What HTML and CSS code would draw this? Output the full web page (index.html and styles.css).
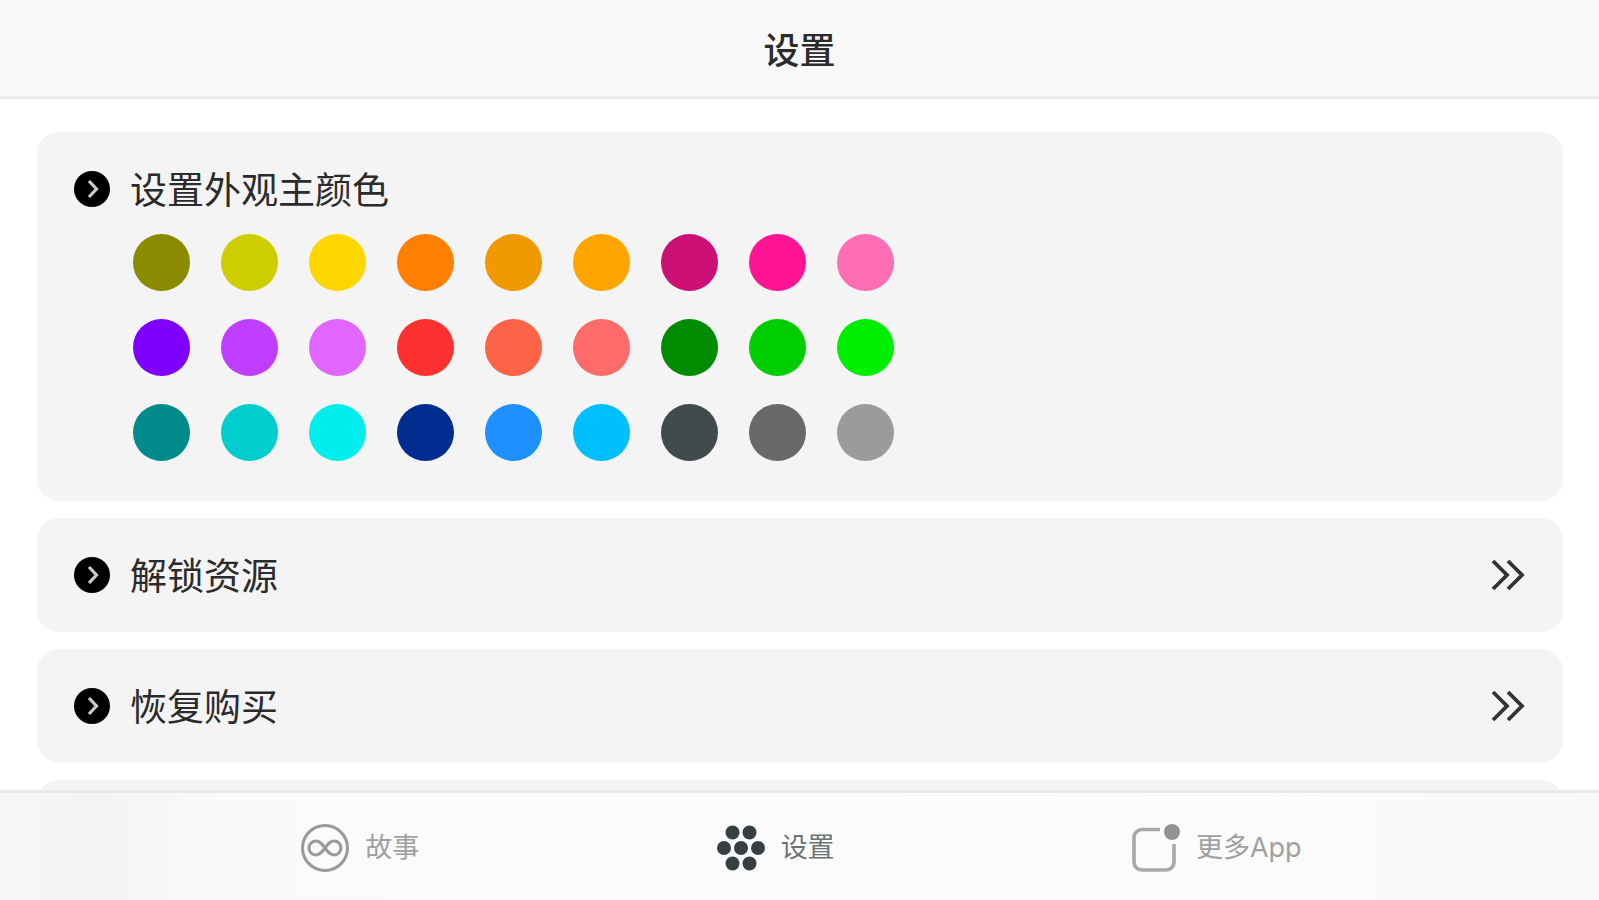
FILE: index.html
```html
<!DOCTYPE html>
<html lang="zh-CN">
<head>
	<meta charset="utf-8">
	<meta name="viewport" content="width=device-width, initial-scale=1">
	<title>设置</title>
	<link rel="stylesheet" href="styles.css">
</head>
<body>
	<!-- 公用图标 -->
	<svg class="defs" aria-hidden="true">
		<symbol id="dot" viewBox="0 0 36 36">
			<circle cx="18" cy="18" r="18" fill="#000"/>
			<path d="M15 10l7.5 8-7.5 8" fill="none" stroke="#ccc" stroke-width="3.2"/>
		</symbol>
		<symbol id="more" viewBox="0 0 34 32">
			<path d="M2 2l14 14L2 30M17 2l14 14-14 14" fill="none" stroke="#333" stroke-width="3.8"/>
		</symbol>
	</svg>
	<header class="header">
		<h1>设置</h1>
	</header>
	<main class="main">
		<section class="card">
			<div class="row">
				<svg class="dot" aria-hidden="true"><use href="#dot"/></svg>
				<h2 id="color-title">设置外观主颜色</h2>
			</div>
			<div class="colors" role="radiogroup" aria-labelledby="color-title">
				<input type="radio" name="color" aria-label="橄榄" style="background:#8b8b00">
				<input type="radio" name="color" aria-label="黄绿" style="background:#cdcd00">
				<input type="radio" name="color" aria-label="金色" style="background:#ffd700">
				<input type="radio" name="color" aria-label="深橙" style="background:#ff7f00">
				<input type="radio" name="color" aria-label="暗橙" style="background:#ee9a00">
				<input type="radio" name="color" aria-label="橙色" style="background:#ffa500">
				<input type="radio" name="color" aria-label="玫红" style="background:#cd1076">
				<input type="radio" name="color" aria-label="深粉" style="background:#ff1493">
				<input type="radio" name="color" aria-label="粉色" style="background:#ff6eb4">
				<input type="radio" name="color" aria-label="紫色" style="background:#7f00ff">
				<input type="radio" name="color" aria-label="兰紫" style="background:#bf3eff">
				<input type="radio" name="color" aria-label="淡紫" style="background:#e066ff">
				<input type="radio" name="color" aria-label="红色" style="background:#ff3030">
				<input type="radio" name="color" aria-label="番茄" style="background:#ff6347">
				<input type="radio" name="color" aria-label="浅红" style="background:#ff6a6a">
				<input type="radio" name="color" aria-label="深绿" style="background:#008b00">
				<input type="radio" name="color" aria-label="绿色" style="background:#00cd00">
				<input type="radio" name="color" aria-label="亮绿" style="background:#00ee00">
				<input type="radio" name="color" aria-label="深青" style="background:#008b8b">
				<input type="radio" name="color" aria-label="青色" style="background:#00cdcd">
				<input type="radio" name="color" aria-label="亮青" style="background:#00eeee">
				<input type="radio" name="color" aria-label="深蓝" style="background:#002b8f">
				<input type="radio" name="color" aria-label="蓝色" style="background:#1e90ff">
				<input type="radio" name="color" aria-label="天蓝" style="background:#00bfff">
				<input type="radio" name="color" aria-label="墨灰" style="background:#414a4c" checked>
				<input type="radio" name="color" aria-label="深灰" style="background:#696969">
				<input type="radio" name="color" aria-label="灰色" style="background:#9b9b9b">
			</div>
		</section>
		<a class="card row" href="#">
			<svg class="dot" aria-hidden="true"><use href="#dot"/></svg>
			<span>解锁资源</span>
			<svg class="more" aria-hidden="true"><use href="#more"/></svg>
		</a>
		<a class="card row" href="#">
			<svg class="dot" aria-hidden="true"><use href="#dot"/></svg>
			<span>恢复购买</span>
			<svg class="more" aria-hidden="true"><use href="#more"/></svg>
		</a>
		<div class="card row"></div>
	</main>
	<nav class="tabs">
		<a href="#">
			<svg viewBox="0 0 48 48" fill="none" stroke="#999" aria-hidden="true">
				<circle cx="24" cy="24" r="22.5" stroke-width="3"/>
				<path d="M24 24c-3-4-5-7-9-7a7 7 0 0 0 0 14c4 0 6-3 9-7s5-7 9-7a7 7 0 0 1 0 14c-4 0-6-3-9-7z" stroke-width="3"/>
			</svg>
			<span>故事</span>
		</a>
		<a class="current" href="#">
			<svg viewBox="0 0 48 48" fill="#363f42" aria-hidden="true">
				<circle cx="15.5" cy="8.5" r="7"/>
				<circle cx="32.5" cy="8.5" r="7"/>
				<circle cx="7" cy="24" r="7"/>
				<circle cx="24" cy="24" r="7"/>
				<circle cx="41" cy="24" r="7"/>
				<circle cx="15.5" cy="39.5" r="7"/>
				<circle cx="32.5" cy="39.5" r="7"/>
			</svg>
			<span>设置</span>
		</a>
		<a href="#">
			<svg viewBox="0 0 48 48" aria-hidden="true">
				<path d="M28 5.5H10a8 8 0 0 0-8 8V38a8 8 0 0 0 8 8h24a8 8 0 0 0 8-8V20" fill="none" stroke="#a8a8a8" stroke-width="3.6"/>
				<circle cx="40" cy="8" r="8" fill="#929292"/>
			</svg>
			<span>更多App</span>
		</a>
	</nav>
</body>
</html>
```
FILE: styles.css
```css
* {
	box-sizing: border-box;
}
body {
	margin: 0;
	height: 100vh;
	display: flex;
	flex-direction: column;
	background: #fff;
	color: #2b2b2b;
	font-family: "Noto Sans CJK SC", sans-serif;
}
a {
	color: inherit;
	text-decoration: none;
}
h1, h2 {
	margin: 0;
}
.defs {
	display: none;
}
/*顶部标题*/
.header {
	padding: 24px 0;
	background: #f8f8f8;
	border-bottom: 3px solid #ebebeb;
	text-align: center;
}
.header h1 {
	font-size: 36px;
	line-height: 48px;
	font-weight: 500;
}
/*设置列表*/
.main {
	flex: 1;
	min-height: 0;
	overflow: hidden;
	display: flex;
	flex-direction: column;
	gap: 17px;
	padding: 33px 36px 0 37px;
}
.card {
	flex: none;
	background: #f4f4f4;
	border-radius: 22px;
}
.row {
	display: flex;
	align-items: center;
	gap: 20px;
	min-height: 114px;
	padding: 0 38px 0 37px;
	font-size: 37px;
	line-height: 42px;
}
.row h2 {
	font-size: 37px;
	font-weight: 400;
}
.row h2, .row span {
	padding-bottom: 2px;
}
.dot {
	width: 36px;
	height: 36px;
}
.more {
	width: 34px;
	height: 32px;
	margin-left: auto;
}
.colors {
	display: grid;
	grid-template-columns: repeat(9, 57px);
	gap: 28px 31px;
	margin-top: -12px;
	padding: 0 36px 40px 96px;
}
.colors input {
	appearance: none;
	width: 57px;
	height: 57px;
	margin: 0;
	border-radius: 50%;
	cursor: pointer;
}
/*底部导航*/
.tabs {
	display: flex;
	justify-content: space-evenly;
	padding: 31px 0 28px 4px;
	border-top: 3px solid #e8e8e8;
	background: linear-gradient(90deg, #f7f7f7, #f4f4f4 6%, #fafafa 14%, #fbfbfb 80%, #f8f8f8);
}
.tabs a {
	display: flex;
	align-items: center;
	gap: 16px;
	color: #a0a0a0;
	font-family: Inter, "Noto Sans CJK SC", sans-serif;
	font-size: 27px;
	line-height: 48px;
}
.tabs svg {
	width: 48px;
	height: 48px;
}
.tabs .current {
	color: #6d7375;
}
```
